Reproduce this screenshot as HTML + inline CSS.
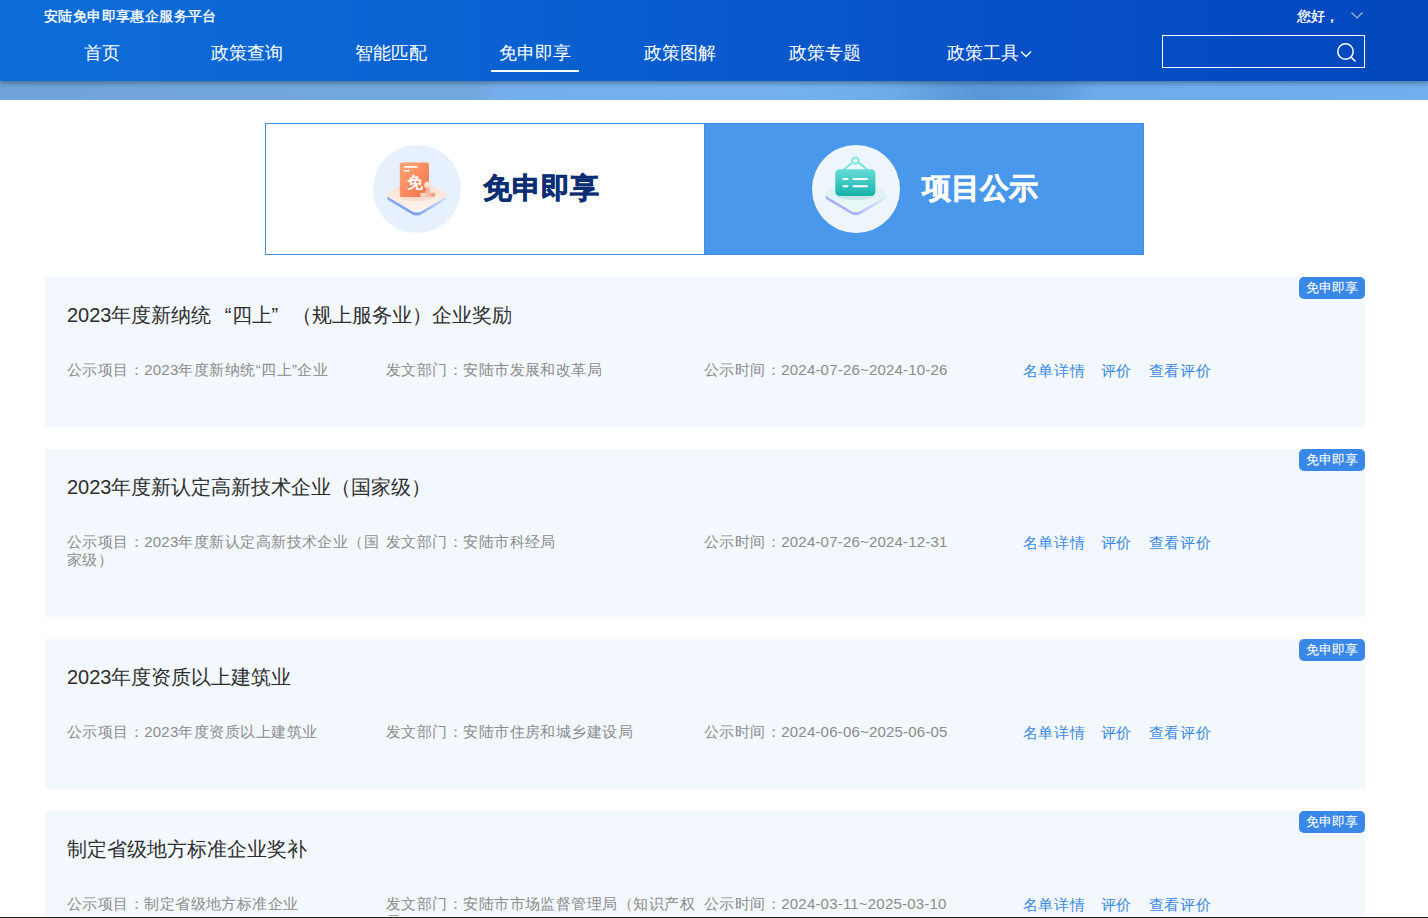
<!DOCTYPE html>
<html><head><meta charset="utf-8">
<style>
*{margin:0;padding:0;box-sizing:border-box}
html,body{width:1428px;height:918px;overflow:hidden;background:#fff;font-family:"Liberation Sans",sans-serif}
.abs{position:absolute}
.hdr{position:absolute;left:0;top:0;width:1428px;height:81px;background:linear-gradient(90deg,#0d6dd8 0%,#0a5fcf 40%,#0550c6 70%,#0447bd 100%);z-index:2;box-shadow:0 2px 5px rgba(0,0,0,.35)}
.strip{position:absolute;left:0;top:81px;width:1428px;height:19px;background:linear-gradient(90deg,#70a4d9 0%,#72a7dd 33%,#76afee 35%,#75b0ef 56%,#70abe9 62%,#5f9edd 66%,#5898d8 69%,#5d9dde 74%,#6eabeb 77%,#73afef 100%)}
.site{position:absolute;left:44px;top:6.5px;color:#fff;font-size:14px;-webkit-text-stroke:.35px #fff;line-height:18px;white-space:nowrap;letter-spacing:.4px}
.hello{position:absolute;left:1297px;top:6.5px;color:#fff;font-size:14px;-webkit-text-stroke:.35px #fff;line-height:18px;white-space:nowrap}
.nav{position:absolute;top:41px;color:#fff;font-size:18px;line-height:24px;white-space:nowrap}
.uline{position:absolute;left:491px;top:70px;width:88px;height:2px;background:#fff}
.search{position:absolute;left:1162px;top:35px;width:203px;height:33px;border:1px solid #fff}
.tab1{position:absolute;left:265px;top:123px;width:439px;height:132px;border:1px solid #3f8fe8;border-right:none;background:#fff}
.tab2{position:absolute;left:704px;top:123px;width:440px;height:132px;background:#4a98eb;border:1px solid #3f8de6}
.tt{position:absolute;font-size:28.5px;font-weight:bold;-webkit-text-stroke:.6px currentColor;line-height:36px;white-space:nowrap}
.card{position:absolute;left:45px;width:1320px;background:#f3f7fe;overflow:hidden}
.badge{position:absolute;left:1254px;top:0;width:66px;height:22px;background:#3988e8;border-radius:5px;color:#fff;font-size:13px;-webkit-text-stroke:.05px #fff;line-height:22px;text-align:center}
.ttl{position:absolute;left:22px;font-size:20px;color:#2e2e2e;line-height:26px;white-space:nowrap}
.q{display:inline-block;width:20px}
.sub{position:absolute;font-size:15px;letter-spacing:.45px;color:#8c8c8c;line-height:18px;white-space:nowrap}
.n{letter-spacing:.2px}
.lnk{position:absolute;font-size:15px;letter-spacing:.75px;color:#3a8ae6;line-height:18px;white-space:nowrap}
.bot{position:absolute;left:0;top:916px;width:1428px;height:2px;background:linear-gradient(#fff 50%,#1e1e18 50%)}
</style></head><body>
<div class="hdr">
  <div class="site">安陆免申即享惠企服务平台</div>
  <div class="hello">您好，</div>
  <svg class="abs" style="left:1350px;top:11px" width="14" height="9" viewBox="0 0 14 9"><path d="M1.5 1.5 L7 7 L12.5 1.5" fill="none" stroke="#a9b3cc" stroke-width="1.2"/></svg>
  <div class="nav" style="left:83.5px">首页</div>
  <div class="nav" style="left:210.5px">政策查询</div>
  <div class="nav" style="left:355px">智能匹配</div>
  <div class="nav" style="left:499px">免申即享</div>
  <div class="nav" style="left:644px">政策图解</div>
  <div class="nav" style="left:789px">政策专题</div>
  <div class="nav" style="left:946.5px">政策工具</div>
  <svg class="abs" style="left:1020px;top:50px" width="12" height="9" viewBox="0 0 12 9"><path d="M1 1.5 L6 6.5 L11 1.5" fill="none" stroke="#fff" stroke-width="1.3"/></svg>
  <div class="uline"></div>
  <div class="search"></div>
  <svg class="abs" style="left:1334px;top:40px" width="24" height="24" viewBox="0 0 24 24"><circle cx="11.5" cy="11.5" r="7.7" fill="none" stroke="#fff" stroke-width="1.5"/><path d="M17 17 L21 21" stroke="#fff" stroke-width="1.6" stroke-linecap="round"/></svg>
</div>
<div class="strip"></div>

<div class="tab1"></div>
<div class="tab2"></div>
<div class="tt" style="left:483px;top:170px;color:#0a2e74">免申即享</div>
<div class="tt" style="left:922px;top:170px;color:#fff">项目公示</div>

<svg class="abs" style="left:373px;top:145px" width="88" height="88" viewBox="0 0 88 88">
  <defs>
    <linearGradient id="og" x1="0" y1="0" x2="1" y2="1"><stop offset="0" stop-color="#ffa675"/><stop offset="1" stop-color="#f3714a"/></linearGradient>
    <linearGradient id="pg" x1="0" y1="0" x2="0" y2="1"><stop offset="0" stop-color="#fcd9c8"/><stop offset="1" stop-color="#fff6f2"/></linearGradient>
    <linearGradient id="eg" x1="0" y1="0" x2="1" y2="0"><stop offset="0" stop-color="#86a9f3"/><stop offset=".5" stop-color="#7aa3f3"/><stop offset="1" stop-color="#d6e2fb"/></linearGradient>
    <linearGradient id="sg" x1="0" y1="0" x2="1" y2="0"><stop offset="0" stop-color="#fde3d6"/><stop offset="1" stop-color="#f39a74"/></linearGradient>
  </defs>
  <circle cx="44" cy="44" r="44" fill="#e6f1fd"/>
  <path d="M49.0 37.0 L70.9 49.9 Q76.1 53.0 70.9 56.1 L49.0 69.0 Q43.8 72.1 38.6 69.0 L16.7 56.1 Q11.5 53.0 16.7 49.9 L38.6 37.0 Q43.8 33.9 49.0 37.0 Z" fill="url(#eg)"/>
  <path d="M49.0 34.0 L70.9 46.9 Q76.1 50.0 70.9 53.1 L49.0 66.0 Q43.8 69.1 38.6 66.0 L16.7 53.1 Q11.5 50.0 16.7 46.9 L38.6 34.0 Q43.8 30.9 49.0 34.0 Z" fill="url(#pg)"/>
  <ellipse cx="43" cy="53" rx="16" ry="3" fill="#f6cdb8" opacity=".5"/>
  <rect x="26.8" y="17.5" width="29.2" height="34.6" rx="2.2" fill="url(#og)"/>
  <path d="M31 21.9 H44.5 M31 25.8 H36.5" stroke="#fff" stroke-width="1.6" stroke-linecap="butt"/>
  <text x="41.6" y="42.5" font-size="15.5" font-weight="bold" fill="#fff" text-anchor="middle" font-family="Liberation Sans, sans-serif">免</text>
  <circle cx="54.8" cy="40" r="3.6" fill="#fde2d4"/>
  <path d="M53.5 42 L52 48.5 L57.5 48.5 L56 42 Z" fill="#f8b99c"/>
  <rect x="47.2" y="47.8" width="15.1" height="4.3" rx="2" fill="url(#sg)"/>
</svg>
<svg class="abs" style="left:812px;top:145px" width="88" height="88" viewBox="0 0 88 88">
  <defs>
    <linearGradient id="tg" x1="0" y1="0" x2="0" y2="1"><stop offset="0" stop-color="#66ddd7"/><stop offset="1" stop-color="#15b2ac"/></linearGradient>
    <linearGradient id="tpg" x1="0" y1="0" x2="0" y2="1"><stop offset="0" stop-color="#d2efed"/><stop offset="1" stop-color="#eef8fb"/></linearGradient>
    <linearGradient id="teg" x1="0" y1="0" x2="1" y2="0"><stop offset="0" stop-color="#a6adf2"/><stop offset=".5" stop-color="#a9b6f4"/><stop offset="1" stop-color="#e6ecfc"/></linearGradient>
  </defs>
  <circle cx="44" cy="44" r="44" fill="#eef5fd"/>
  <path d="M49.1 35.4 L71.9 49.0 Q77.1 52.1 71.9 55.2 L49.1 68.8 Q44.0 71.9 38.8 68.8 L16.0 55.2 Q10.8 52.1 16.0 49.0 L38.8 35.4 Q44.0 32.3 49.1 35.4 Z" fill="url(#teg)"/>
  <path d="M49.1 32.4 L71.9 46.0 Q77.1 49.1 71.9 52.2 L49.1 65.8 Q44.0 68.9 38.8 65.8 L16.0 52.2 Q10.8 49.1 16.0 46.0 L38.8 32.4 Q44.0 29.3 49.1 32.4 Z" fill="url(#tpg)"/>
  <ellipse cx="43.5" cy="51.5" rx="18" ry="3.5" fill="#b9dcdc" opacity=".6"/>
  <path d="M40.5 17.5 L31.5 24.8 M46.5 17.5 L55.5 24.8" stroke="#77e3de" stroke-width="1.9" stroke-linecap="round"/>
  <circle cx="43.4" cy="15.6" r="3.2" fill="none" stroke="#7fe8e3" stroke-width="2"/>
  <rect x="23.3" y="24.3" width="40.1" height="26.6" rx="4.3" fill="url(#tg)"/>
  <path d="M31.5 34 H35.5 M41.5 34 H55 M31.5 41.2 H35.5 M41.5 41.2 H55" stroke="#fff" stroke-width="2" stroke-linecap="round"/>
</svg>
<!-- card 1 -->
<div class="card" style="top:277px;height:150px">
  <div class="badge">免申即享</div>
  <div class="ttl" style="top:25px">2023年度新纳统<span class="q" style="text-align:right">“</span>四上<span class="q">”</span>（规上服务业）企业奖励</div>
  <div class="sub" style="left:22px;top:83.5px">公示项目：<span class="n">2023</span>年度新纳统“四上”企业</div>
  <div class="sub" style="left:341px;top:83.5px">发文部门：安陆市发展和改革局</div>
  <div class="sub" style="left:659px;top:83.5px">公示时间：<span class="n">2024-07-26~2024-10-26</span></div>
  <div class="lnk" style="left:977.5px;top:84.5px">名单详情<span style="margin-left:15px">评价</span><span style="margin-left:16.5px">查看评价</span></div>
</div>
<!-- card 2 -->
<div class="card" style="top:449px;height:168px">
  <div class="badge">免申即享</div>
  <div class="ttl" style="top:25px">2023年度新认定高新技术企业（国家级）</div>
  <div class="sub" style="left:22px;top:83.5px">公示项目：<span class="n">2023</span>年度新认定高新技术企业（国<br>家级）</div>
  <div class="sub" style="left:341px;top:83.5px">发文部门：安陆市科经局</div>
  <div class="sub" style="left:659px;top:83.5px">公示时间：<span class="n">2024-07-26~2024-12-31</span></div>
  <div class="lnk" style="left:977.5px;top:84.5px">名单详情<span style="margin-left:15px">评价</span><span style="margin-left:16.5px">查看评价</span></div>
</div>
<!-- card 3 -->
<div class="card" style="top:639px;height:150px">
  <div class="badge">免申即享</div>
  <div class="ttl" style="top:25px">2023年度资质以上建筑业</div>
  <div class="sub" style="left:22px;top:83.5px">公示项目：<span class="n">2023</span>年度资质以上建筑业</div>
  <div class="sub" style="left:341px;top:83.5px">发文部门：安陆市住房和城乡建设局</div>
  <div class="sub" style="left:659px;top:83.5px">公示时间：<span class="n">2024-06-06~2025-06-05</span></div>
  <div class="lnk" style="left:977.5px;top:84.5px">名单详情<span style="margin-left:15px">评价</span><span style="margin-left:16.5px">查看评价</span></div>
</div>
<!-- card 4 -->
<div class="card" style="top:811px;height:150px">
  <div class="badge">免申即享</div>
  <div class="ttl" style="top:25px">制定省级地方标准企业奖补</div>
  <div class="sub" style="left:22px;top:83.5px">公示项目：制定省级地方标准企业</div>
  <div class="sub" style="left:341px;top:83.5px">发文部门：安陆市市场监督管理局（知识产权<br>局）</div>
  <div class="sub" style="left:659px;top:83.5px">公示时间：<span class="n">2024-03-11~2025-03-10</span></div>
  <div class="lnk" style="left:977.5px;top:84.5px">名单详情<span style="margin-left:15px">评价</span><span style="margin-left:16.5px">查看评价</span></div>
</div>
<div class="bot"></div>
</body></html>
